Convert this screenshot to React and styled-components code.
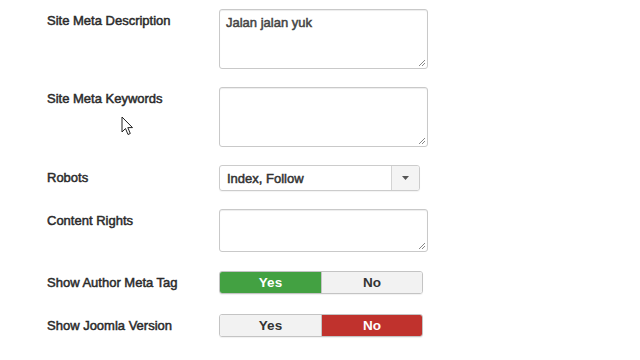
import React from 'react';
import styled, { createGlobalStyle } from 'styled-components';

const Global = createGlobalStyle`
  html, body {
    margin: 0;
    padding: 0;
    background: #fff;
  }
  body {
    font-family: "Liberation Sans", Arial, sans-serif;
    color: #333;
  }
`;

const Page = styled.div`
  position: relative;
  width: 640px;
  height: 360px;
  overflow: hidden;
  padding: 9px 0 0 47px;
  box-sizing: border-box;
`;

const Form = styled.div`
  display: flex;
  flex-direction: column;
`;

const Row = styled.div`
  display: grid;
  grid-template-columns: 172px auto;
  align-items: ${(p) => (p.$center ? 'center' : 'start')};
  margin-bottom: ${(p) => p.$gap || 18}px;
`;

const Label = styled.label`
  font-size: 13px;
  line-height: 18px;
  padding-top: ${(p) => (p.$center ? 0 : 3)}px;
  color: #2b2b2b;
  -webkit-text-stroke: 0.5px #2b2b2b;
`;

const TextArea = styled.div`
  position: relative;
  width: 209px;
  height: ${(p) => p.$h}px;
  box-sizing: border-box;
  border: 1px solid #c9c9c9;
  border-radius: 3px;
  box-shadow: inset 0 1px 1px rgba(0, 0, 0, 0.075);
  padding: 5px 6px;
  font-size: 13px;
  line-height: 16px;
  color: #444;
  -webkit-text-stroke: 0.5px #444;
`;

const Grip = styled.svg`
  position: absolute;
  right: 1px;
  bottom: 1px;
`;

const Select = styled.div`
  display: flex;
  width: 201px;
  height: 26px;
  box-sizing: border-box;
  border: 1px solid #ccc;
  border-radius: 3px;
  box-shadow: 0 1px 1px rgba(0, 0, 0, 0.05);
  overflow: hidden;
`;

const SelectValue = styled.div`
  flex: 1;
  display: flex;
  align-items: center;
  padding-left: 7px;
  font-size: 13px;
  color: #333;
  -webkit-text-stroke: 0.5px #333;
`;

const SelectButton = styled.div`
  width: 27px;
  display: flex;
  align-items: center;
  justify-content: center;
  border-left: 1px solid #d4d4d4;
  background: #f4f4f4;
`;

const Toggle = styled.div`
  display: flex;
  width: 204px;
  height: 23px;
  box-sizing: border-box;
  border: 1px solid #c4c4c4;
  border-radius: 3px;
  overflow: hidden;
  box-shadow: 0 1px 1px rgba(0, 0, 0, 0.06);
`;

const Option = styled.div`
  flex: ${(p) => (p.$first ? '0 0 101px' : 1)};
  display: flex;
  align-items: center;
  justify-content: center;
  font-size: 13.5px;
  font-weight: bold;
  background: ${(p) =>
    p.$active === 'yes' ? '#43a142' : p.$active === 'no' ? '#c0322d' : '#f2f2f2'};
  color: ${(p) => (p.$active ? '#fff' : '#333')};
  border-left: ${(p) => (p.$first ? 'none' : '1px solid #c4c4c4')};
`;

const Cursor = styled.svg`
  position: absolute;
  left: 121px;
  top: 116px;
`;

const ResizeGrip = () => (
  <Grip width="8" height="8" viewBox="0 0 8 8">
    <path d="M7 1 L1 7 M7 4 L4 7" stroke="#888" strokeWidth="1" />
  </Grip>
);

const Field = ({ label, children, center, gap }) => (
  <Row $center={center} $gap={gap}>
    <Label $center={center}>{label}</Label>
    {children}
  </Row>
);

const YesNo = ({ value }) => (
  <Toggle>
    <Option $first $active={value === 'yes' ? 'yes' : undefined}>Yes</Option>
    <Option $active={value === 'no' ? 'no' : undefined}>No</Option>
  </Toggle>
);

export default function App() {
  return (
    <>
      <Global />
      <Page>
        <Form>
          <Field label="Site Meta Description">
            <TextArea $h={60}>
              Jalan jalan yuk
              <ResizeGrip />
            </TextArea>
          </Field>
          <Field label="Site Meta Keywords">
            <TextArea $h={60}>
              <ResizeGrip />
            </TextArea>
          </Field>
          <Field label="Robots" center>
            <Select>
              <SelectValue>Index, Follow</SelectValue>
              <SelectButton>
                <svg width="7" height="4" viewBox="0 0 7 4">
                  <path d="M0 0 H7 L3.5 4 Z" fill="#555" />
                </svg>
              </SelectButton>
            </Select>
          </Field>
          <Field label="Content Rights" gap={19}>
            <TextArea $h={43}>
              <ResizeGrip />
            </TextArea>
          </Field>
          <Field label="Show Author Meta Tag" center gap={20}>
            <YesNo value="yes" />
          </Field>
          <Field label="Show Joomla Version" center>
            <YesNo value="no" />
          </Field>
        </Form>
        <Cursor width="13" height="20" viewBox="0 0 13 20">
          <path
            d="M1 1 L1 16 L4.5 12.5 L7 18.5 L9.3 17.5 L6.8 11.6 L11.5 11.6 Z"
            fill="#fff"
            stroke="#222"
            strokeWidth="1"
            strokeLinejoin="round"
          />
        </Cursor>
      </Page>
    </>
  );
}
